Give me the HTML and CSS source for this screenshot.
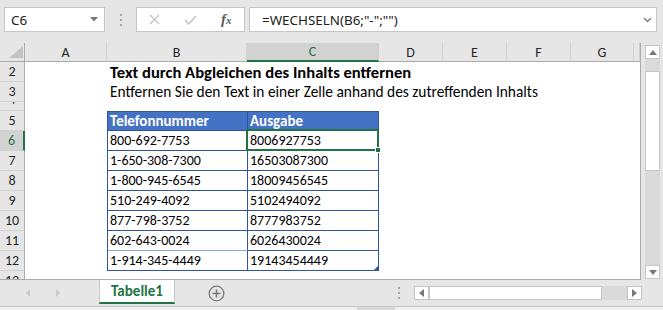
FILE: index.html
```html
<!DOCTYPE html>
<html lang="de">
<head>
    <meta charset="UTF-8">
    <meta name="viewport" content="width=device-width, initial-scale=1.0">
    <title>WECHSELN</title>
    <link rel="stylesheet" href="styles.css">
</head>
<body>
    <div class="window">
        <div class="formula-bar">
            <div class="name-box">
                <span>C6</span>
                <svg width="8" height="5" viewBox="0 0 8 5"><path d="M0 0h8L4 4.5z" fill="#777"/></svg>
            </div>
            <div class="grip"><i></i><i></i><i></i></div>
            <div class="fx-buttons">
                <span class="fx-slot">
                    <svg width="11" height="11" viewBox="0 0 11 11"><path d="M1 1l9 9M10 1l-9 9" stroke="#c3c3c3" stroke-width="1.4" fill="none"/></svg>
                </span>
                <span class="fx-slot">
                    <svg width="13" height="10" viewBox="0 0 13 10"><path d="M1 5l3.5 4L12 1" stroke="#c3c3c3" stroke-width="1.5" fill="none"/></svg>
                </span>
                <span class="fx-slot fx">f<small>x</small></span>
            </div>
            <div class="formula-input">
                <span>=WECHSELN(B6;"-";"")</span>
                <svg width="9" height="6" viewBox="0 0 9 6"><path d="M1 1l3.5 3.5L8 1" stroke="#808080" stroke-width="1.5" fill="none"/></svg>
            </div>
        </div>

        <div class="workspace">
            <div class="sheet">
                <div class="col-heads">
                    <div class="corner">
                        <svg width="14" height="12" viewBox="0 0 14 12"><path d="M14 0v12H0z" fill="#c4c4c4"/></svg>
                    </div>
                    <div class="col-head">A</div>
                    <div class="col-head">B</div>
                    <div class="col-head active">C</div>
                    <div class="col-head">D</div>
                    <div class="col-head">E</div>
                    <div class="col-head">F</div>
                    <div class="col-head">G</div>
                    <div class="col-head"></div>
                </div>

                <div class="sheet-body">
                    <div class="row-heads">
                        <div class="row-head">2</div>
                        <div class="row-head">3</div>
                        <div class="row-head short">4</div>
                        <div class="row-head">5</div>
                        <div class="row-head active">6</div>
                        <div class="row-head">7</div>
                        <div class="row-head">8</div>
                        <div class="row-head">9</div>
                        <div class="row-head">10</div>
                        <div class="row-head">11</div>
                        <div class="row-head">12</div>
                        <div class="row-head cut">13</div>
                    </div>

                    <div class="cells">
                        <div class="title">Text durch Abgleichen des Inhalts entfernen</div>
                        <div class="subtitle">Entfernen Sie den Text in einer Zelle anhand des zutreffenden Inhalts</div>

                        <div class="data-table">
                            <div class="head">Telefonnummer</div>
                            <div class="head">Ausgabe</div>
                            <div>800-692-7753</div>
                            <div>8006927753</div>
                            <div>1-650-308-7300</div>
                            <div>16503087300</div>
                            <div>1-800-945-6545</div>
                            <div>18009456545</div>
                            <div>510-249-4092</div>
                            <div>5102494092</div>
                            <div>877-798-3752</div>
                            <div>8777983752</div>
                            <div class="light-bottom">602-643-0024</div>
                            <div>6026430024</div>
                            <div>1-914-345-4449</div>
                            <div class="last-cell">19143454449<span class="resize"></span></div>
                        </div>

                        <div class="active-cell"><span class="fill-handle"></span></div>
                    </div>
                </div>
            </div>

            <div class="vscroll">
                <div class="sb-btn">
                    <svg width="8" height="5" viewBox="0 0 8 5"><path d="M0 5h8L4 0z" fill="#777"/></svg>
                </div>
                <div class="vtrack"><div class="vthumb"></div></div>
                <div class="sb-btn">
                    <svg width="8" height="5" viewBox="0 0 8 5"><path d="M0 0h8L4 5z" fill="#777"/></svg>
                </div>
            </div>
        </div>

        <div class="tabbar">
            <div class="tab-nav">
                <svg width="4" height="8" viewBox="0 0 4 8"><path d="M4 0v8L0 4z" fill="#c8c8c8"/></svg>
                <svg width="4" height="8" viewBox="0 0 4 8"><path d="M0 0v8l4-4z" fill="#c8c8c8"/></svg>
            </div>
            <div class="sheet-tab">Tabelle1</div>
            <div class="add-sheet">
                <svg width="17" height="17" viewBox="0 0 17 17">
                    <circle cx="8.5" cy="8.5" r="7.3" stroke="#7a7a7a" stroke-width="1.3" fill="none"/>
                    <path d="M8.5 4.5v8M4.5 8.5h8" stroke="#7a7a7a" stroke-width="1.6"/>
                </svg>
            </div>
            <div class="spacer"></div>
            <div class="grip tab-grip"><i></i><i></i><i></i></div>
            <div class="hscroll">
                <div class="sb-btn hbtn">
                    <svg width="5" height="8" viewBox="0 0 5 8"><path d="M5 0v8L0 4z" fill="#777"/></svg>
                </div>
                <div class="hthumb"></div>
                <div class="htrack"></div>
                <div class="sb-btn hbtn">
                    <svg width="5" height="8" viewBox="0 0 5 8"><path d="M0 0v8l5-4z" fill="#777"/></svg>
                </div>
            </div>
        </div>

        <div class="status"><span></span></div>
    </div>
</body>
</html>
```

FILE: styles.css
```css
* {
    box-sizing: border-box;
}

body {
    margin: 0;
    font-family: Carlito, Lato, "Liberation Sans", sans-serif;
    background-color: #e6e6e6;
}

.window {
    width: 663px;
    height: 310px;
    display: flex;
    flex-direction: column;
    background-color: #e6e6e6;
    overflow: hidden;
}

/* formula bar */

.formula-bar {
    display: flex;
    height: 43px;
    padding: 7px 6px 11px 4px;
    font-family: "Noto Sans", "Open Sans", sans-serif;
    font-size: 13.4px;
    color: #222;
}

.name-box {
    width: 101px;
    background-color: #fff;
    border: 1px solid #c6c6c6;
    display: flex;
    align-items: center;
    justify-content: space-between;
    padding: 0 6px 0 6px;
}

.grip {
    width: 31px;
    display: flex;
    flex-direction: column;
    align-items: center;
    justify-content: center;
    gap: 3px;
}

.grip i {
    display: block;
    width: 2px;
    height: 2px;
    background-color: #a8a8a8;
}

.fx-buttons {
    width: 109px;
    background-color: #fff;
    border: 1px solid #c6c6c6;
    display: flex;
    align-items: center;
}

.fx-slot {
    width: 36px;
    display: flex;
    justify-content: center;
    align-items: center;
}

.fx {
    font-family: "Liberation Serif", serif;
    font-style: italic;
    font-weight: bold;
    font-size: 15px;
    color: #5a5a5a;
    align-items: baseline;
}

.fx small {
    font-size: 11px;
}

.formula-input {
    flex: 1;
    margin-left: 4px;
    background-color: #fff;
    border: 1px solid #c6c6c6;
    display: flex;
    align-items: center;
    justify-content: space-between;
    padding: 0 4px 0 12px;
}

/* sheet */

.workspace {
    display: flex;
    height: 237px;
}

.sheet {
    width: 641px;
    background-color: #fff;
    border-right: 1px solid #ababab;
    border-bottom: 1px solid #ababab;
    display: flex;
    flex-direction: column;
    overflow: hidden;
}

.col-heads {
    display: grid;
    grid-template-columns: 25px 82px 140px 132px 64px 64px 64px 63px 6px;
    height: 19px;
    background-color: #e6e6e6;
}

.corner {
    border-right: 1px solid #ababab;
    border-bottom: 1px solid #ababab;
    display: flex;
    align-items: flex-end;
    justify-content: flex-end;
    padding: 0 1px 3px 0;
}

.col-head {
    border-right: 1px solid #d0d0d0;
    border-bottom: 1px solid #ababab;
    display: flex;
    align-items: center;
    justify-content: center;
    font-size: 14px;
    color: #262626;
}

.col-head.active {
    background-color: #d2d2d2;
    color: #217346;
    border-bottom: 2px solid #217346;
}

.sheet-body {
    flex: 1;
    display: flex;
}

.row-heads {
    width: 25px;
    display: flex;
    flex-direction: column;
    background-color: #e6e6e6;
}

.row-head {
    height: 20px;
    flex-shrink: 0;
    border-right: 1px solid #ababab;
    border-bottom: 1px solid #d0d0d0;
    display: flex;
    justify-content: center;
    align-items: flex-start;
    overflow: hidden;
    font-size: 14px;
    line-height: 20px;
    color: #262626;
}

.row-head.short {
    height: 9px;
    align-items: flex-end;
}

.row-head.cut {
    height: 8px;
    border-bottom: none;
}

.row-head.active {
    background-color: #d2d2d2;
    color: #217346;
    border-right: 2px solid #217346;
}

.cells {
    flex: 1;
    display: grid;
    grid-template-columns: 82px 140px 132px 64px 64px 64px 63px 6px;
    grid-template-rows: 20px 20px 9px repeat(8, 20px) 8px;
    font-size: 14px;
    color: #000;
}

.title,
.subtitle {
    grid-column: 2 / -1;
    padding-left: 3px;
    white-space: nowrap;
    line-height: 20px;
}

.title {
    grid-row: 1;
    font-weight: bold;
    font-size: 16.6px;
}

.subtitle {
    grid-row: 2;
    font-size: 15.4px;
}

.data-table {
    grid-row: 4 / 12;
    grid-column: 2 / 4;
    display: grid;
    grid-template-columns: 140px 131px;
    grid-template-rows: 19px repeat(7, 20px);
    border-left: 1px solid #2f5597;
    border-top: 1px solid #2f5597;
}

.data-table div {
    border-right: 1px solid #2f5597;
    border-bottom: 1px solid #2f5597;
    padding-left: 2px;
    line-height: 20px;
    white-space: nowrap;
}

.data-table .head {
    background-color: #4472c4;
    color: #fff;
    font-weight: bold;
    font-size: 15px;
    line-height: 19px;
}

.data-table .light-bottom {
    border-bottom-color: #8eaadb;
}

.data-table .last-cell {
    position: relative;
}

.resize {
    position: absolute;
    right: 0;
    bottom: 0;
    width: 4px;
    height: 4px;
    background-color: #2f5597;
    clip-path: polygon(100% 0, 100% 100%, 0 100%);
}

.active-cell {
    grid-row: 5;
    grid-column: 3;
    margin: -2px 0 0 -1px;
    border: 2px solid #217346;
    position: relative;
    z-index: 2;
}

.fill-handle {
    position: absolute;
    right: -4px;
    bottom: -4px;
    width: 6px;
    height: 6px;
    background-color: #217346;
    border: 1px solid #fff;
}

/* scroll bars */

.vscroll {
    width: 22px;
    display: flex;
    flex-direction: column;
    padding: 2px 3px 1px 4px;
}

.sb-btn {
    height: 14px;
    flex-shrink: 0;
    background-color: #fff;
    border: 1px solid #c6c6c6;
    display: flex;
    align-items: center;
    justify-content: center;
}

.vtrack {
    flex: 1;
    background-color: #dadada;
    padding-top: 12px;
}

.vthumb {
    height: 100px;
    background-color: #fff;
    border: 1px solid #c6c6c6;
}

/* sheet tabs */

.tabbar {
    height: 26px;
    display: flex;
}

.tab-nav {
    width: 99px;
    display: flex;
    align-items: center;
    gap: 26px;
    padding-left: 26px;
}

.sheet-tab {
    width: 76px;
    margin-bottom: 2px;
    background-color: #fff;
    border-left: 1px solid #c6c6c6;
    border-right: 1px solid #c6c6c6;
    border-bottom: 2px solid #217346;
    display: flex;
    align-items: center;
    justify-content: center;
    font-weight: bold;
    font-size: 15px;
    color: #217346;
}

.add-sheet {
    margin-left: 33px;
    display: flex;
    align-items: center;
}

.spacer {
    flex: 1;
}

.tab-grip {
    width: 2px;
    margin-right: 14px;
}

.hscroll {
    width: 228px;
    margin: 6px 21px 6px 0;
    display: flex;
}

.hbtn {
    width: 15px;
}

.hthumb {
    width: 173px;
    background-color: #fff;
    border: 1px solid #c6c6c6;
}

.htrack {
    flex: 1;
    background-color: #dadada;
}

.status {
    height: 4px;
    border-top: 1px solid #c6c6c6;
    background-color: #f0f0f0;
}

.status span {
    display: block;
    width: 38px;
    height: 3px;
    margin-left: 357px;
    background-color: #d8d8d8;
}
```
